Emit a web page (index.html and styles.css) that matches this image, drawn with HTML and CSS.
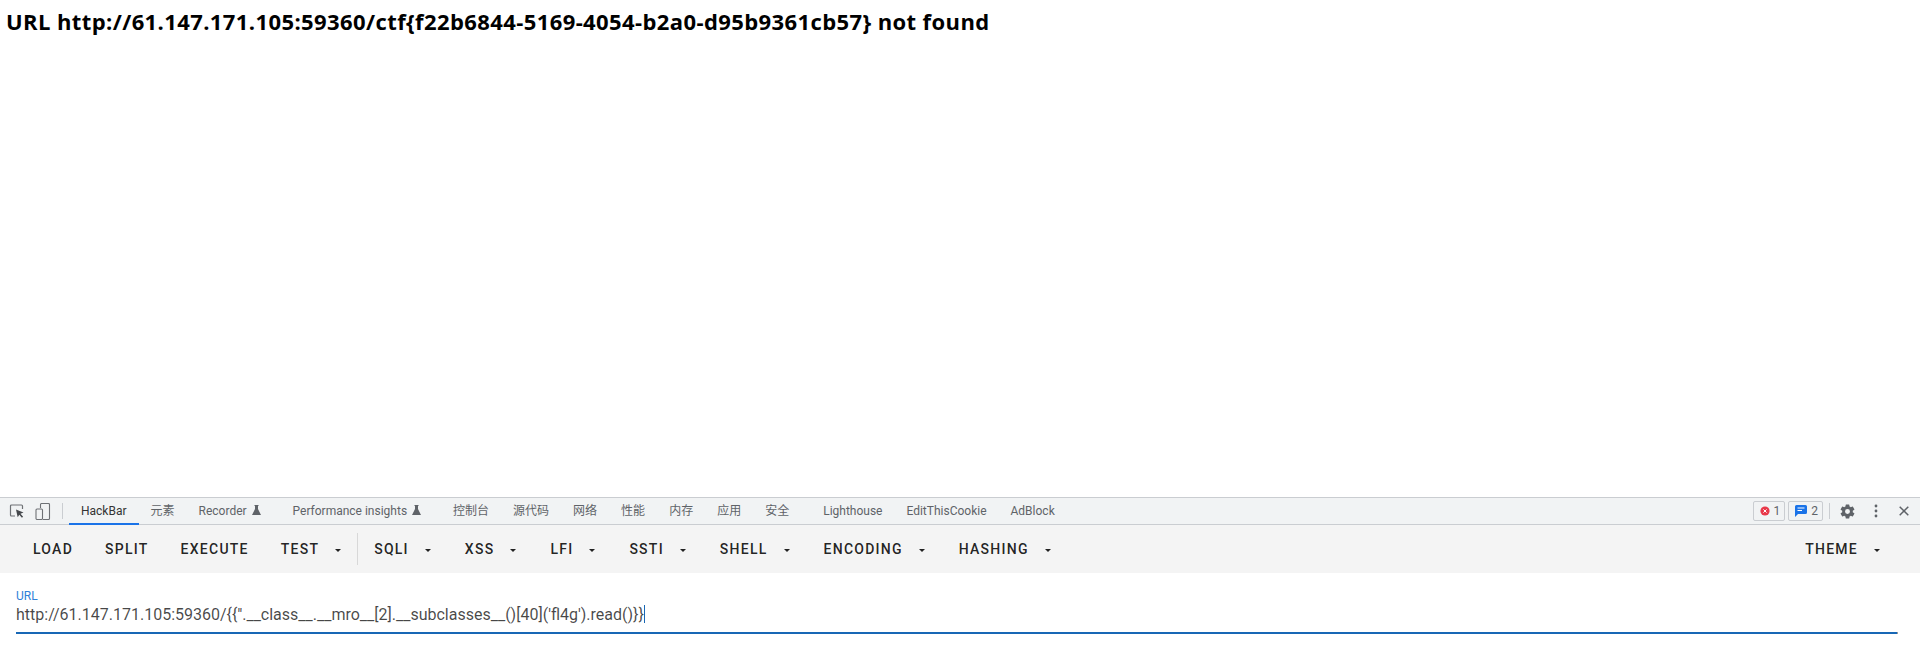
FILE: index.html
```html
<!DOCTYPE html>
<html lang="en">
  <head>
    <meta charset="UTF-8" />
    <meta name="viewport" content="width=device-width, initial-scale=1.0" />
    <title>404 Not Found</title>
    <link rel="stylesheet" href="styles.css">
  </head>
  <body>
    <div class="page">
      <h3>URL http://61.147.171.105:59360/ctf{f22b6844-5169-4054-b2a0-d95b9361cb57} not found</h3>
    </div>

    <div class="devtools">
      <div class="tabbar">
        <svg class="tool-icon inspect" width="16" height="16" viewBox="0 0 16 16">
          <path d="M6 13H2.500a1 1 0 0 1-1-1V3a1 1 0 0 1 1-1h10a1 1 0 0 1 1 1v3" fill="none" stroke="#6e7175" stroke-width="1.2"/>
          <path d="M7 6.500l7.500 3-3 1.200 2.600 3-1.200 1-2.600-3-1.600 2.600z" fill="#45484c"/>
        </svg>
        <svg class="tool-icon device" width="16" height="17" viewBox="0 0 16 17">
          <path d="M5.500 5V1.500a1 1 0 0 1 1-1h7a1 1 0 0 1 1 1v14a1 1 0 0 1-1 1H8" fill="none" stroke="#6e7175" stroke-width="1.1"/>
          <rect x="1" y="6" width="6.500" height="10.500" rx="1" fill="none" stroke="#6e7175" stroke-width="1.1"/>
        </svg>
        <span class="tool-sep"></span>
        <div class="tab active">HackBar</div>
        <div class="tab">元素</div>
        <div class="tab lab">Recorder <svg class="flask" width="9" height="10" viewBox="0 0 9 10"><path d="M2.500 0h4v1H6v3l3 6H0l3-6V1h-.5z" fill="#5f6368"/></svg></div>
        <div class="tab lab">Performance insights <svg class="flask" width="9" height="10" viewBox="0 0 9 10"><path d="M2.500 0h4v1H6v3l3 6H0l3-6V1h-.5z" fill="#5f6368"/></svg></div>
        <div class="tab">控制台</div>
        <div class="tab">源代码</div>
        <div class="tab">网络</div>
        <div class="tab">性能</div>
        <div class="tab">内存</div>
        <div class="tab">应用</div>
        <div class="tab wide">安全</div>
        <div class="tab">Lighthouse</div>
        <div class="tab">EditThisCookie</div>
        <div class="tab">AdBlock</div>
        <div class="tabbar-right">
          <div class="badge">
            <svg width="10" height="10" viewBox="0 0 10 10"><circle cx="5" cy="5" r="4.600" fill="#e8394a"/><path d="M3.400 3.400l3.200 3.200M6.600 3.400l-3.200 3.200" stroke="#fff" stroke-width="1"/></svg>
            1
          </div>
          <div class="badge">
            <svg width="12" height="12" viewBox="0 0 12 12"><path d="M1.500 0h9A1.500 1.500 0 0 1 12 1.500v6A1.500 1.500 0 0 1 10.500 9H3l-3 3V1.500A1.500 1.500 0 0 1 1.500 0z" fill="#1a73e8"/><path d="M2.500 3h7M2.500 5.500h4.500" stroke="#fff" stroke-width="1"/></svg>
            2
          </div>
          <span class="tool-sep"></span>
          <svg class="gear" width="17" height="17" viewBox="0 0 24 24"><path d="M19.430 12.980a7.800 7.800 0 0 0 0-1.960l2.110-1.650a.5.500 0 0 0 .12-.64l-2-3.460a.5.500 0 0 0-.61-.22l-2.490 1a7.300 7.300 0 0 0-1.690-.98l-.38-2.650A.49.49 0 0 0 14 2h-4a.49.49 0 0 0-.49.420l-.38 2.650c-.61.25-1.170.59-1.690.98l-2.490-1a.49.49 0 0 0-.61.220l-2 3.460a.49.49 0 0 0 .12.640l2.110 1.650a7.900 7.900 0 0 0 0 1.960l-2.110 1.650a.5.500 0 0 0-.12.640l2 3.460c.12.220.39.300.61.220l2.490-1c.52.400 1.080.73 1.690.98l.38 2.650c.03.240.24.420.49.420h4c.25 0 .46-.18.49-.420l.38-2.650a7.700 7.700 0 0 0 1.690-.98l2.490 1c.23.090.49 0 .61-.22l2-3.460a.5.500 0 0 0-.12-.64zM12 15.500a3.500 3.500 0 1 1 0-7 3.500 3.500 0 0 1 0 7z" fill="#5f6368"/></svg>
          <svg class="dots" width="4" height="14" viewBox="0 0 4 14"><circle cx="2" cy="2" r="1.400" fill="#5f6368"/><circle cx="2" cy="7" r="1.400" fill="#5f6368"/><circle cx="2" cy="12" r="1.400" fill="#5f6368"/></svg>
          <svg class="close" width="10" height="10" viewBox="0 0 10 10"><path d="M.7.7l8.600 8.600M9.300.7L.7 9.300" stroke="#5f6368" stroke-width="1.500"/></svg>
        </div>
      </div>

      <div class="toolbar">
        <button>LOAD</button>
        <button>SPLIT</button>
        <button>EXECUTE</button>
        <button class="menu first">TEST</button>
        <span class="divider"></span>
        <button class="menu">SQLI</button>
        <button class="menu">XSS</button>
        <button class="menu">LFI</button>
        <button class="menu">SSTI</button>
        <button class="menu">SHELL</button>
        <button class="menu">ENCODING</button>
        <button class="menu">HASHING</button>
        <button class="menu theme">THEME</button>
      </div>

      <div class="url-field">
        <label>URL</label>
        <div class="url-value">http://61.147.171.105:59360/{{''.__class__.__mro__[2].__subclasses__()[40]('fl4g').read()}}<span class="caret"></span></div>
      </div>
    </div>
  </body>
</html>
```

FILE: styles.css
```css
* {
  box-sizing: border-box;
  margin: 0;
  padding: 0;
}
body {
  height: 645px;
  width: 100%;
  overflow: hidden;
  background-color: white;
  display: flex;
  flex-direction: column;
}
.page {
  height: 497px;
  padding: 5px 6px;
}
h3 {
  font-family: "Open Sans", sans-serif;
  font-size: 22px;
  font-weight: 700;
  line-height: 32px;
  letter-spacing: 0.4px;
  color: black;
}
.devtools {
  flex: 1;
}
.tabbar {
  height: 28px;
  display: flex;
  align-items: center;
  background-color: #f1f3f4;
  border-top: 1px solid #cacdd1;
  border-bottom: 1px solid #cacdd1;
  font-family: Roboto, "Noto Sans CJK SC", sans-serif;
  font-size: 12px;
  color: #5f6368;
}
.tool-icon.inspect {
  margin-left: 9px;
}
.tool-icon.device {
  margin-left: 10px;
}
.tool-sep {
  width: 1px;
  height: 16px;
  background-color: #cacdd1;
  margin: 0 6px 0 11px;
}
.tab {
  height: 26px;
  line-height: 26px;
  padding: 0 12px;
  white-space: nowrap;
}
.tab.active {
  color: #333;
  border-bottom: 2px solid #1a73e8;
  height: 27px;
}
.tab.lab {
  padding-right: 20px;
}
.tab.wide {
  padding-right: 22px;
}
.flask {
  margin-left: 2px;
}
.tabbar-right {
  margin-left: auto;
  display: flex;
  align-items: center;
  padding-right: 11px;
}
.tabbar-right .tool-sep {
  margin: 0 0 0 3px;
}
.badge {
  height: 20px;
  display: flex;
  align-items: center;
  gap: 4px;
  padding: 0 4px 0 6px;
  margin-right: 3px;
  border: 1px solid #cacdd1;
  border-radius: 2px;
  font-size: 12px;
}
.gear {
  margin-left: 9px;
}
.dots {
  margin-left: 18px;
}
.close {
  margin-left: 21px;
}
.toolbar {
  height: 48px;
  display: flex;
  align-items: center;
  padding: 0 16px 0 17px;
  background-color: #f4f4f4;
}
.toolbar button {
  height: 36px;
  padding: 0 16px;
  border: none;
  background: none;
  font-family: Roboto, sans-serif;
  font-size: 14px;
  font-weight: 500;
  letter-spacing: 1.25px;
  color: rgba(0, 0, 0, 0.87);
}
.toolbar .menu {
  margin-right: 2px;
}
.toolbar .menu.first {
  margin-right: 0;
}
.toolbar .menu::after {
  content: "";
  display: inline-block;
  margin-left: 16px;
  vertical-align: middle;
  border-left: 3px solid transparent;
  border-right: 3px solid transparent;
  border-top: 3px solid #222;
}
.toolbar .theme {
  margin-left: auto;
  margin-right: 8px;
}
.divider {
  width: 1px;
  height: 32px;
  background-color: #d8d8d8;
}
.url-field {
  margin: 16px 22px 0 16px;
  height: 45px;
  border-bottom: 2px solid #1867b5;
  border-image: linear-gradient(to right, #1867b5 calc(100% - 2px), #999 0) 1;
}
.url-field label {
  display: block;
  font-family: Roboto, sans-serif;
  font-size: 12px;
  line-height: 14px;
  color: #2f80d8;
}
.url-value {
  font-family: Roboto, sans-serif;
  font-size: 16px;
  line-height: 24px;
  color: rgba(0, 0, 0, 0.72);
  white-space: nowrap;
}
.caret {
  display: inline-block;
  width: 1px;
  height: 18px;
  vertical-align: -3px;
  background-color: #1867b5;
}
```
